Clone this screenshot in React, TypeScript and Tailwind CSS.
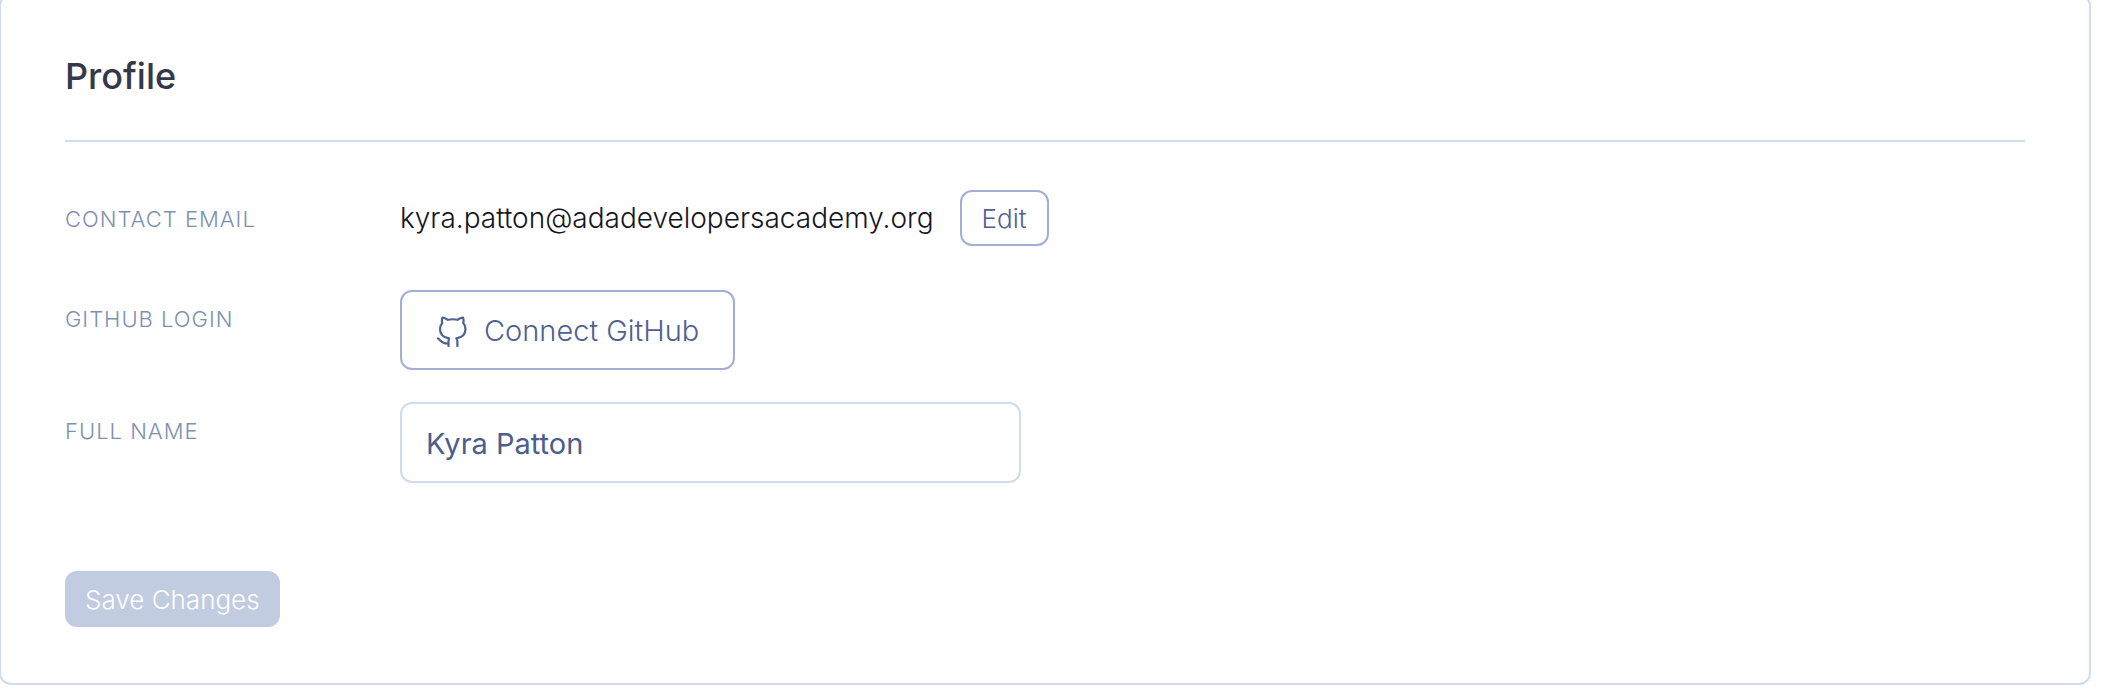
import { useState } from "react";

const labelClass = "pt-[15px] text-[22px] leading-[28px] font-light tracking-[1px] text-[#7d90b2] uppercase";

function OctocatIcon() {
  return (
    <svg viewBox="0 0 32 32" className="size-8 shrink-0" fill="none" stroke="currentColor" strokeWidth="2.2" strokeLinecap="round" strokeLinejoin="round" aria-hidden="true">
      <path d="M12.500 31V26.500C12.500 25 12.600 24.200 13.200 23.400C7.500 22.500 4 19.500 4 14C4 11.500 4.800 9.500 6.300 8C5.600 6.200 5.800 4.300 6.500 2.600C8.600 2.700 10.300 3.600 11.800 4.800C15 4.100 18.500 4.100 21.500 4.800C23 3.600 24.800 2.700 27 2.600C27.700 4.300 27.800 6.200 27.200 8C28.700 9.500 29.500 11.500 29.500 14C29.500 19.500 26 22.500 20.300 23.400C21 24.200 21.400 25 21.400 26.500V31" />
      <path d="M2 23.500C4.500 24.800 5.500 28.800 12 28.500" />
    </svg>
  );
}

export default function App() {
  const [name, setName] = useState("Kyra Patton");

  return (
    <main className="overflow-hidden bg-white pb-[5px] font-['Inter',sans-serif]">
      <section className="-mt-1.5 mr-[23px] -ml-px rounded-xl border-2 border-[#d0dbed] px-16 py-14">
        <h1 className="border-b-2 border-[#d0dbed] pb-10 text-[36px] leading-[48px] font-medium text-[#353849]">Profile</h1>

        <form onSubmit={(event) => event.preventDefault()}>
          <div className="grid grid-cols-[335px_1fr] gap-y-8 pt-12">
            <div className={labelClass}>Contact Email</div>
            <div className="mb-3 flex items-center gap-[26px]">
              <span className="text-[28px] leading-[40px] font-light text-[#14151f]">kyra.patton@adadevelopersacademy.org</span>
              <button type="button" className="h-14 rounded-xl border-2 border-[#a3aed8] px-5 pt-0.5 text-[26px] leading-[32px] font-light text-[#4f6190]">Edit</button>
            </div>

            <div className={labelClass}>GitHub Login</div>
            <div>
              <button type="button" className="flex h-20 items-center gap-4 rounded-xl border-2 border-[#a3aed8] px-[34px] pt-0.5 text-[29px] leading-[40px] font-light text-[#4f6190]">
                <OctocatIcon />
                Connect GitHub
              </button>
            </div>

            <label htmlFor="full-name" className={labelClass}>Full Name</label>
            <input id="full-name" type="text" value={name} onChange={(event) => setName(event.target.value)} className="h-[81px] w-full max-w-[621px] rounded-xl border-2 border-[#d0dbed] px-6 pt-0.5 text-[29px] leading-[40px] font-normal text-[#4b5d8c] outline-none" />
          </div>

          <button type="submit" disabled className="mt-22 block h-14 rounded-xl bg-[#c2cce0] px-5 pt-0.5 text-[26px] leading-[32px] font-light text-white">Save Changes</button>
        </form>
      </section>
    </main>
  );
}
